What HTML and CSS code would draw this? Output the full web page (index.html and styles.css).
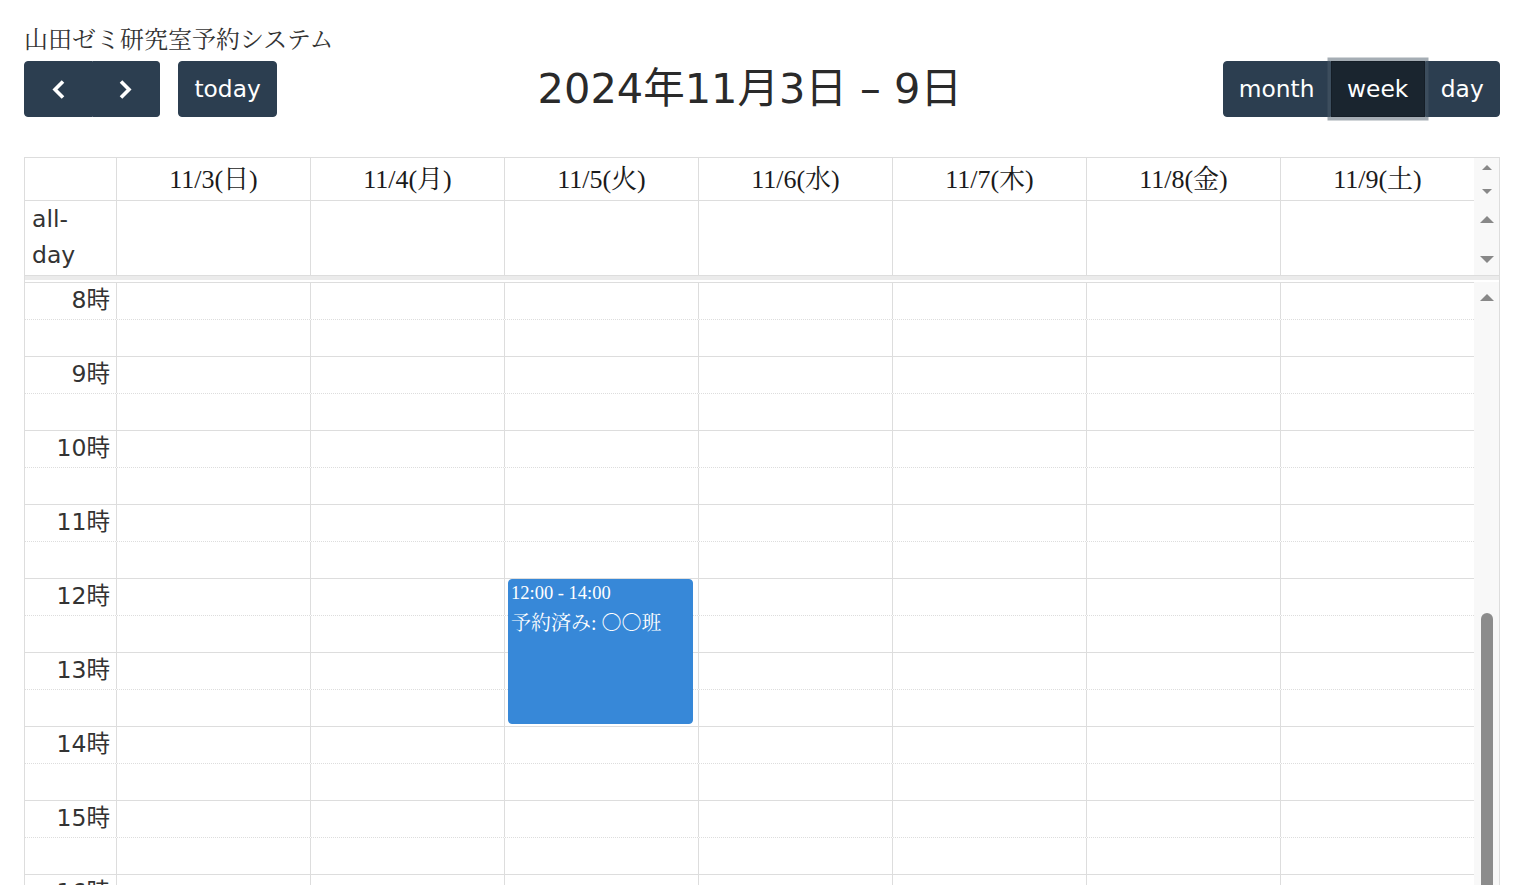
FILE: index.html
```html
<!DOCTYPE html>
<html lang="ja">
<head>
<meta charset="utf-8">
<title>山田ゼミ研究室予約システム</title>
<link rel="stylesheet" href="styles.css">
</head>
<body>
<div class="app">
  <h1 class="app-title">山田ゼミ研究室予約システム</h1>
  <div class="toolbar">
    <div class="tb-left">
      <div class="btn-group">
        <button class="btn btn-icon" aria-label="prev"><svg width="35" height="35" viewBox="0 0 35 35"><path d="M22 9.5 L14 17.5 L22 25.5" fill="none" stroke="#fff" stroke-width="3.6" stroke-linejoin="miter" stroke-linecap="butt"/></svg></button>
        <button class="btn btn-icon" aria-label="next"><svg width="35" height="35" viewBox="0 0 35 35"><path d="M13 9.5 L21 17.5 L13 25.5" fill="none" stroke="#fff" stroke-width="3.6" stroke-linejoin="miter" stroke-linecap="butt"/></svg></button>
      </div>
      <button class="btn btn-single">today</button>
    </div>
    <h2 class="tb-title">2024年11月3日 – 9日</h2>
    <div class="btn-group">
      <button class="btn">month</button>
      <button class="btn active">week</button>
      <button class="btn">day</button>
    </div>
  </div>

  <div class="cal">
    <div class="cal-row cal-head">
      <div class="hcell axis"></div>
      <div class="hcell">11/3(日)</div>
      <div class="hcell">11/4(月)</div>
      <div class="hcell">11/5(火)</div>
      <div class="hcell">11/6(水)</div>
      <div class="hcell">11/7(木)</div>
      <div class="hcell">11/8(金)</div>
      <div class="hcell">11/9(土)</div>
      <div class="gutter gutter-head"><span class="tri-up sm"></span><span class="tri-down sm"></span></div>
    </div>
    <div class="cal-row cal-allday">
      <div class="acell axis"><span class="allday-label">all-day</span></div>
      <div class="acell"></div>
      <div class="acell"></div>
      <div class="acell"></div>
      <div class="acell"></div>
      <div class="acell"></div>
      <div class="acell"></div>
      <div class="acell"></div>
      <div class="gutter gutter-allday"><span class="tri-up"></span><span class="tri-down"></span></div>
    </div>
    <div class="cal-divider"></div>
    <div class="cal-body">
      <div class="slots">
        <div class="slot"><div class="slot-label">8時</div><div class="sc"></div><div class="sc"></div><div class="sc"></div><div class="sc"></div><div class="sc"></div><div class="sc"></div><div class="sc"></div></div>
        <div class="slot minor"><div class="slot-label"></div><div class="sc"></div><div class="sc"></div><div class="sc"></div><div class="sc"></div><div class="sc"></div><div class="sc"></div><div class="sc"></div></div>
        <div class="slot"><div class="slot-label">9時</div><div class="sc"></div><div class="sc"></div><div class="sc"></div><div class="sc"></div><div class="sc"></div><div class="sc"></div><div class="sc"></div></div>
        <div class="slot minor"><div class="slot-label"></div><div class="sc"></div><div class="sc"></div><div class="sc"></div><div class="sc"></div><div class="sc"></div><div class="sc"></div><div class="sc"></div></div>
        <div class="slot"><div class="slot-label">10時</div><div class="sc"></div><div class="sc"></div><div class="sc"></div><div class="sc"></div><div class="sc"></div><div class="sc"></div><div class="sc"></div></div>
        <div class="slot minor"><div class="slot-label"></div><div class="sc"></div><div class="sc"></div><div class="sc"></div><div class="sc"></div><div class="sc"></div><div class="sc"></div><div class="sc"></div></div>
        <div class="slot"><div class="slot-label">11時</div><div class="sc"></div><div class="sc"></div><div class="sc"></div><div class="sc"></div><div class="sc"></div><div class="sc"></div><div class="sc"></div></div>
        <div class="slot minor"><div class="slot-label"></div><div class="sc"></div><div class="sc"></div><div class="sc"></div><div class="sc"></div><div class="sc"></div><div class="sc"></div><div class="sc"></div></div>
        <div class="slot"><div class="slot-label">12時</div><div class="sc"></div><div class="sc"></div><div class="sc"></div><div class="sc"></div><div class="sc"></div><div class="sc"></div><div class="sc"></div></div>
        <div class="slot minor"><div class="slot-label"></div><div class="sc"></div><div class="sc"></div><div class="sc"></div><div class="sc"></div><div class="sc"></div><div class="sc"></div><div class="sc"></div></div>
        <div class="slot"><div class="slot-label">13時</div><div class="sc"></div><div class="sc"></div><div class="sc"></div><div class="sc"></div><div class="sc"></div><div class="sc"></div><div class="sc"></div></div>
        <div class="slot minor"><div class="slot-label"></div><div class="sc"></div><div class="sc"></div><div class="sc"></div><div class="sc"></div><div class="sc"></div><div class="sc"></div><div class="sc"></div></div>
        <div class="slot"><div class="slot-label">14時</div><div class="sc"></div><div class="sc"></div><div class="sc"></div><div class="sc"></div><div class="sc"></div><div class="sc"></div><div class="sc"></div></div>
        <div class="slot minor"><div class="slot-label"></div><div class="sc"></div><div class="sc"></div><div class="sc"></div><div class="sc"></div><div class="sc"></div><div class="sc"></div><div class="sc"></div></div>
        <div class="slot"><div class="slot-label">15時</div><div class="sc"></div><div class="sc"></div><div class="sc"></div><div class="sc"></div><div class="sc"></div><div class="sc"></div><div class="sc"></div></div>
        <div class="slot minor"><div class="slot-label"></div><div class="sc"></div><div class="sc"></div><div class="sc"></div><div class="sc"></div><div class="sc"></div><div class="sc"></div><div class="sc"></div></div>
        <div class="slot"><div class="slot-label">16時</div><div class="sc"></div><div class="sc"></div><div class="sc"></div><div class="sc"></div><div class="sc"></div><div class="sc"></div><div class="sc"></div></div>
        <div class="slot minor"><div class="slot-label"></div><div class="sc"></div><div class="sc"></div><div class="sc"></div><div class="sc"></div><div class="sc"></div><div class="sc"></div><div class="sc"></div></div>

        <div class="event">
          <div class="event-time">12:00 - 14:00</div>
          <div class="event-title">予約済み: 〇〇班</div>
        </div>
      </div>
      <div class="gutter gutter-body"><span class="tri-up"></span><span class="thumb"></span></div>
    </div>
  </div>
</div>
</body>
</html>
```

FILE: styles.css
```css
* { box-sizing: border-box; }

html, body {
  margin: 0;
  height: 100%;
  overflow: hidden;
  background: #fff;
}

.app {
  padding: 20px 25px 0 24px;
  font-family: "DejaVu Sans", "Noto Sans CJK JP", sans-serif;
  font-size: 23.5px;
  color: #333;
}

.app-title {
  margin: 0 0 5px;
  font-family: "Noto Serif CJK JP", "Liberation Serif", "Noto Sans CJK JP", serif;
  font-weight: 400;
  font-size: 24px;
  line-height: 36px;
  color: #333;
}

/* toolbar */
.toolbar {
  display: flex;
  justify-content: space-between;
  align-items: center;
  height: 56px;
  margin-bottom: 40px;
}

.tb-left {
  display: flex;
  gap: 18px;
}

.btn-group {
  display: flex;
}

.btn {
  font-family: "DejaVu Sans", sans-serif;
  font-size: 23.3px;
  line-height: 1.5;
  height: 56px;
  padding: 0 15.3px;
  margin: 0;
  border: 1px solid #2c3e50;
  background: #2c3e50;
  color: #fff;
  border-radius: 0;
  display: flex;
  align-items: center;
}

.btn-group .btn:first-child { border-radius: 4px 0 0 4px; }
.btn-group .btn:last-child { border-radius: 0 4px 4px 0; }
.btn-single { border-radius: 4px; }

.btn-icon { padding: 0 15.8px; }
.btn-icon + .btn-icon { border-left: none; }
.btn-icon svg { display: block; }

.btn.active {
  background: #1a252f;
  border-color: #151e27;
  box-shadow: 0 0 0 3.5px rgba(76, 91, 106, 0.5);
  position: relative;
  z-index: 1;
}

.tb-title {
  margin: 0;
  font-family: "DejaVu Sans", "Noto Sans CJK JP", sans-serif;
  font-size: 41.5px;
  font-weight: 400;
  line-height: 1;
  color: #2a2a2a;
}

/* calendar */
.cal {
  border: 1px solid #ddd;
  border-bottom: none;
}

.cal-row {
  display: grid;
  grid-template-columns: 91px repeat(7, 194px) 25px;
}

.hcell {
  height: 43px;
  border-left: 1px solid #ddd;
  border-bottom: 1px solid #ddd;
  display: flex;
  align-items: center;
  justify-content: center;
  font-family: "Liberation Serif", "Noto Serif CJK JP", "Noto Sans CJK JP", serif;
  font-size: 26px;
  color: #1a1a1a;
  padding-bottom: 5px;
}

.hcell.axis { border-left: none; }

.acell {
  height: 74px;
  border-left: 1px solid #ddd;
}

.acell.axis {
  border-left: none;
  padding-left: 7px;
  line-height: 36px;
  color: #333;
}

.allday-label {
  display: block;
  width: 60px;
}

.gutter {
  background: #f8f8f8;
  display: flex;
  flex-direction: column;
  align-items: center;
}

.gutter-head {
  justify-content: space-between;
  padding: 7px 0 7px;
}

.gutter-allday {
  justify-content: space-between;
  padding: 15px 0 12px;
}

.gutter-body {
  width: 25px;
  padding-top: 12px;
}

.tri-up {
  width: 0;
  height: 0;
  border-left: 7.5px solid transparent;
  border-right: 7.5px solid transparent;
  border-bottom: 7.5px solid #888;
}

.tri-down {
  width: 0;
  height: 0;
  border-left: 7.5px solid transparent;
  border-right: 7.5px solid transparent;
  border-top: 7.5px solid #888;
}

.tri-up.sm {
  border-left-width: 5px;
  border-right-width: 5px;
  border-bottom-width: 5px;
}

.tri-down.sm {
  border-left-width: 5px;
  border-right-width: 5px;
  border-top-width: 5px;
}

.thumb {
  margin-top: 312px;
  width: 12px;
  height: 400px;
  border-radius: 6px 6px 0 0;
  background: #8c8c8c;
}

.cal-divider {
  height: 7px;
  border-top: 1px solid #ddd;
  background: linear-gradient(#ebebeb 0 4px, #fff 4px 100%);
}

.cal-body {
  display: flex;
  height: 640px;
  overflow: hidden;
}

.slots {
  width: 1449px;
  position: relative;
}

.slot {
  display: grid;
  grid-template-columns: 91px repeat(7, 194px);
  height: 37px;
  border-top: 1px solid #ddd;
}

.slot.minor {
  border-top: 1px dotted #ddd;
}

.slot-label {
  text-align: right;
  padding-right: 6px;
  line-height: 35px;
  color: #333;
  white-space: nowrap;
}

.sc {
  border-left: 1px solid #ddd;
}

.event {
  position: absolute;
  left: 483px;
  top: 297px;
  width: 185px;
  height: 145px;
  background: #3788d8;
  border: 1px solid #3788d8;
  border-radius: 4px;
  color: #fff;
  padding: 1px 2px;
  font-family: "Liberation Serif", "Noto Serif CJK JP", "Noto Sans CJK JP", serif;
}

.event-time {
  font-size: 18.5px;
  line-height: 24px;
}

.event-title {
  font-size: 20px;
  line-height: 30px;
  margin-top: 3px;
}
```
